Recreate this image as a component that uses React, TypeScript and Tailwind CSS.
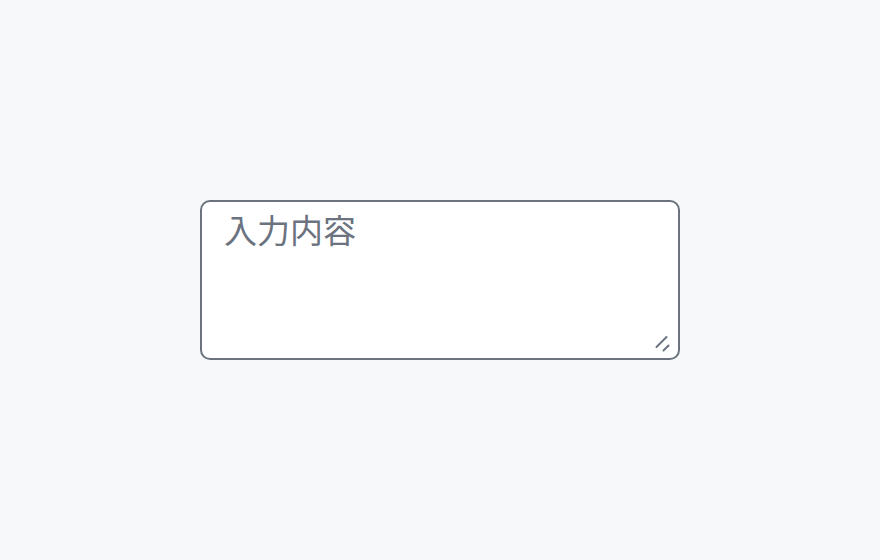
export default function App() {
  return (
    <div className="flex h-[560px] w-[880px] items-center justify-center bg-[#f7f8fa]">
      <div className="relative">
        <textarea
          placeholder="入力内容"
          className="block h-[160px] w-[480px] resize-none rounded-[10px] border-2 border-[#6b7280] bg-white px-[22px] py-[3px] text-[33px] leading-[48px] text-[#374151] outline-none placeholder:text-[#6b7280]"
          style={{ fontFamily: '"Noto Sans CJK JP", "Noto Sans", sans-serif' }}
        />
        <svg
          className="pointer-events-none absolute left-[454px] top-[134px] h-[18px] w-[18px] text-[#6b7280]"
          viewBox="0 0 18 18"
          fill="none"
          stroke="currentColor"
          strokeWidth="2"
          strokeLinecap="round"
        >
          <path d="M2.5 13 L12.5 3" />
          <path d="M9.5 16.5 L14.5 11.5" />
        </svg>
      </div>
    </div>
  );
}
